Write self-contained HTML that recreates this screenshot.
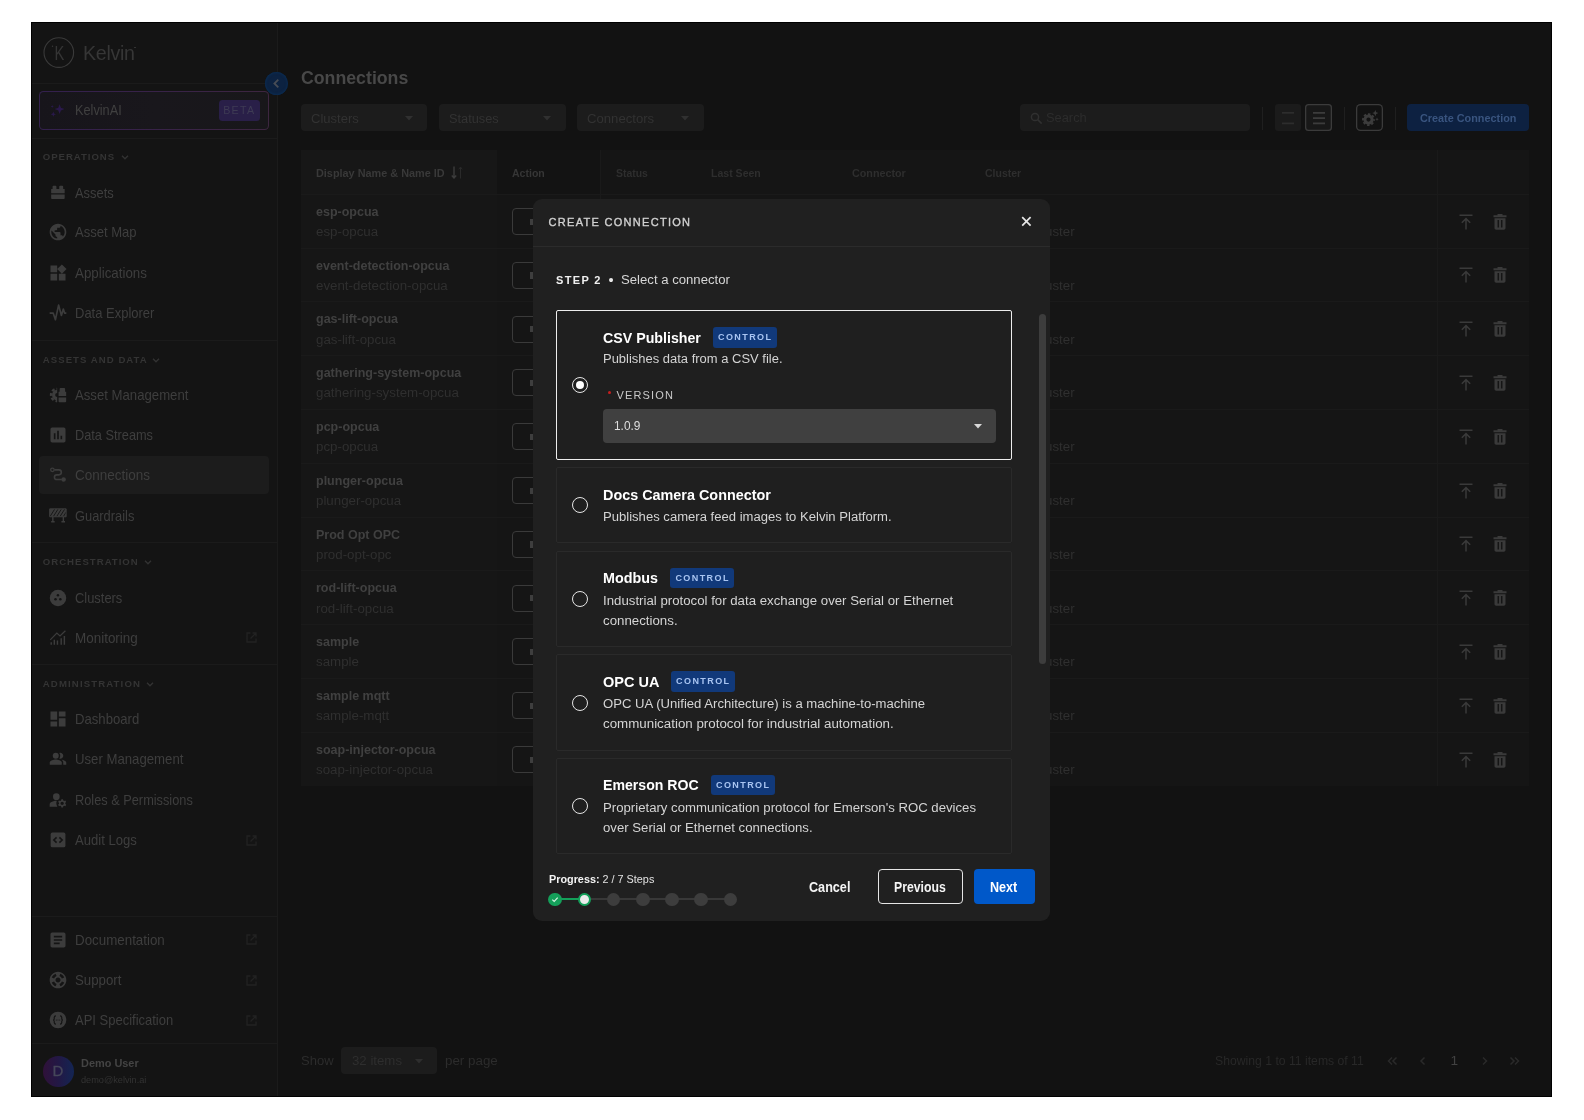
<!DOCTYPE html>
<html lang="en">
<head>
<meta charset="utf-8">
<title>Kelvin - Connections</title>
<style>
*{box-sizing:border-box;margin:0;padding:0}
html,body{width:1584px;height:1120px;background:#fff;overflow:hidden}
body{font-family:"Liberation Sans",sans-serif;color:#3c3c3c;position:relative}
#app{position:absolute;left:31px;top:22px;width:1521px;height:1075px;background:#121212;overflow:hidden;box-shadow:0 0 0 1px #0a0a0a inset}

#stage{position:absolute;left:0;top:0;width:1584px;height:1120px;overflow:hidden;will-change:transform}
.abs{position:absolute}
.t{position:absolute;white-space:nowrap;line-height:20px;margin-top:-10px;transform-origin:0 50%}
.hl{position:absolute;height:1px;background:#1b1b1b}
.vl{position:absolute;width:1px;background:#1d1d1d}
/* sidebar */
#sidebar{position:absolute;left:31px;top:22px;width:246px;height:1075px;background:#141414}
.sec{font-size:9.6px;font-weight:bold;color:#343434;left:42.8px}
.nav{font-size:14.2px;color:#3e3e3e;left:75.4px}
.ico{position:absolute;left:48px;width:20px;height:20px;margin-top:-10px;fill:#3c3c3c}
.ext{position:absolute;left:246px;width:11px;height:11px;margin-top:-5.5px;fill:none;stroke:#222;stroke-width:1.3}
</style>
</head>
<body>
<div id="app"></div>
<div id="stage">
<!--SIDEBAR-->
<div id="sidebar"></div>
<div class="vl" style="left:277px;top:22px;height:1075px;background:#1b1b1b"></div>
<!-- logo -->
<svg class="abs" style="left:42px;top:36px" width="34" height="34" viewBox="0 0 34 34"><circle cx="16.8" cy="16.6" r="14.8" fill="none" stroke="#3a3a3a" stroke-width="1.1"/><text transform="translate(12.600,23.800) scale(.76,1)" font-family="Liberation Sans, sans-serif" font-size="19.400" fill="#353535">K</text><circle cx="10.500" cy="10.200" r=".7" fill="#3a3a3a"/></svg>
<span class="t" id="logotxt" style="transform:scaleX(1.0071);left:82.8px;top:53.2px;font-size:19.5px;color:#363636;letter-spacing:-.3px;line-height:30px;margin-top:-15px">Kelvin</span>
<div class="abs" style="left:134.3px;top:46.5px;width:1.8px;height:1.8px;border-radius:50%;background:#383838"></div>
<div class="hl" style="left:31px;top:83px;width:246px"></div>
<!-- KelvinAI -->
<div class="abs" style="left:39px;top:91px;width:230px;height:38.5px;border-radius:4.5px;background:linear-gradient(90deg,#33204e,#392347 60%,#3d2640)"></div><div class="abs" style="left:40px;top:92px;width:228px;height:36.5px;border-radius:3.5px;background:linear-gradient(90deg,#17151b,#19171c 50%,#18171a)"></div>
<svg class="abs" style="left:49px;top:102px" width="17" height="17" viewBox="0 0 17 17" fill="#2a194c"><path d="M10.6 2.2l1.3 3.6 3.6 1.3-3.6 1.3-1.3 3.6-1.3-3.6-3.6-1.3 3.6-1.3z"/><path d="M4.3 9.6l.7 1.9 1.9.7-1.9.7-.7 1.9-.7-1.9-1.9-.7 1.9-.7z"/><path d="M3.2 3l.4 1.1 1.1.4-1.1.4-.4 1.1-.4-1.1-1.1-.4 1.1-.4z"/></svg>
<span class="t" id="kai" style="transform:scaleX(0.9103);left:74.5px;top:110.1px;font-size:14px;color:#404040">KelvinAI</span>
<div class="abs" style="left:219px;top:99.5px;width:40.5px;height:21px;border-radius:3.5px;background:#291f48"></div>
<span class="t" id="beta" style="letter-spacing:1.29px;left:223.2px;top:110px;font-size:10.7px;color:#3e3b54">BETA</span>
<div class="hl" style="left:31px;top:137.5px;width:246px"></div>
<!-- collapse button -->
<div class="abs" style="left:265px;top:71.5px;width:23px;height:23px;border-radius:50%;background:#0c2241;box-shadow:inset 0 0 2px 1px #0b2b50"></div>
<svg class="abs" style="left:271px;top:77.5px" width="11" height="11" viewBox="0 0 11 11"><path d="M7.300 1.600L3.400 5.500l3.900 3.900" fill="none" stroke="#474c55" stroke-width="1.800"/></svg>

<!-- OPERATIONS -->
<span class="t sec" style="letter-spacing:0.96px;top:157px">OPERATIONS</span>
<svg class="abs chev" style="left:120.5px;top:154px" width="8" height="7" viewBox="0 0 8 7"><path d="M1 1.8l3 3 3-3" fill="none" stroke="#333" stroke-width="1.3"/></svg>
<svg class="ico" style="top:192.5px" viewBox="0 0 24 24"><path d="M3.8 7.300h1.700V4.300c0-.6.4-1 1-1h2.600c.6 0 1 .4 1 1v3h3.400v-3c0-.6.4-1 1-1h2.700c.6 0 1 .4 1 1v3H20v5.100H3.800zM3.800 13.800H20v4.500c0 .6-.4 1-1 1H4.800c-.6 0-1-.4-1-1z"/></svg>
<span class="t nav" style="transform:translateY(0.1px) scaleX(0.9089);top:192.5px">Assets</span>
<svg class="ico" style="top:232.3px" viewBox="0 0 24 24"><path d="M12 2C6.480 2 2 6.480 2 12s4.480 10 10 10 10-4.480 10-10S17.520 2 12 2zm-1 17.930c-3.950-.490-7-3.850-7-7.930 0-.62.080-1.210.210-1.790L9 15v1c0 1.100.9 2 2 2v1.930zm6.900-2.540c-.26-.81-1-1.390-1.900-1.390h-1v-3c0-.55-.45-1-1-1H8v-2h2c.55 0 1-.45 1-1V7h2c1.100 0 2-.9 2-2v-.41c2.930 1.190 5 4.060 5 7.410 0 2.080-.8 3.970-2.100 5.390z"/></svg>
<span class="t nav" style="transform:translateY(0.1px) scaleX(0.9190);top:232.3px">Asset Map</span>
<svg class="ico" style="top:272.9px" viewBox="0 0 24 24"><path d="M13 13v8h8v-8h-8zM3 21h8v-8H3v8zM3 3v8h8V3H3zm13.660-1.310L11 7.340 16.660 13l5.660-5.660-5.660-5.650z"/></svg>
<span class="t nav" style="transform:translateY(0.1px) scaleX(0.9397);top:272.9px">Applications</span>
<svg class="ico" style="top:313.2px" viewBox="0 0 24 24"><path d="M2 12.100h4.200l2.700 8 3.800-17.600 3.400 12.500 2.300-7.700 1.500 4.800H22" fill="none" stroke="#3c3c3c" stroke-width="2" stroke-linejoin="round"/></svg>
<span class="t nav" style="transform:translateY(0.1px) scaleX(0.9153);top:313.2px">Data Explorer</span>
<div class="hl" style="left:31px;top:340px;width:246px"></div>

<!-- ASSETS AND DATA -->
<span class="t sec" style="letter-spacing:1.04px;top:359.5px">ASSETS AND DATA</span>
<svg class="abs chev" style="left:152.2px;top:356.5px" width="8" height="7" viewBox="0 0 8 7"><path d="M1 1.8l3 3 3-3" fill="none" stroke="#333" stroke-width="1.3"/></svg>
<svg class="ico" style="top:394.6px" viewBox="0 0 24 24"><circle cx="11" cy="12" r="4.300" fill="none" stroke="#3c3c3c" stroke-width="3.800"/><circle cx="11" cy="12" r="7.300" fill="none" stroke="#3c3c3c" stroke-width="3" stroke-dasharray="3.300 2.430" stroke-dashoffset="1.600"/><rect x="11" y="0" width="13" height="24" fill="#141414"/><path d="M12.700 8h1.300V4.600c0-.6.4-1 1-1h4.500c.6 0 1 .4 1 1V8h1.300v5.300h-9.100zM12.700 15h9.100v4.700c0 .6-.4 1-1 1h-7.100c-.6 0-1-.4-1-1z"/></svg>
<span class="t nav" style="transform:translateY(0.1px) scaleX(0.9276);top:394.6px">Asset Management</span>
<svg class="ico" style="top:435px" viewBox="0 0 24 24"><path d="M19 3H5c-1.100 0-2 .9-2 2v14c0 1.100.9 2 2 2h14c1.100 0 2-.9 2-2V5c0-1.100-.9-2-2-2zM9 17H7v-7h2v7zm4 0h-2V7h2v10zm4 0h-2v-4h2v4z"/></svg>
<span class="t nav" style="transform:translateY(0.1px) scaleX(0.8993);top:435px">Data Streams</span>
<div class="abs" style="left:39px;top:456px;width:230px;height:38px;border-radius:4px;background:#1c1c1c"></div>
<svg class="ico" style="top:475.2px" viewBox="0 0 24 24"><circle cx="5.300" cy="5.800" r="2.100" fill="none" stroke="#3c3c3c" stroke-width="1.500"/><circle cx="18.700" cy="17.400" r="2.700"/><path d="M7.600 5.800h5.400a3 3 0 010 6h-2.500a2.800 2.800 0 000 5.600h6" fill="none" stroke="#3c3c3c" stroke-width="1.900"/></svg>
<span class="t nav" style="transform:translateY(0.1px) scaleX(0.9509);top:475.2px">Connections</span>
<svg class="ico" style="top:515.7px" viewBox="0 0 24 24"><path d="M2 3.400h19.800v9.500H2z"/><path d="M5.800 12.900v6M18.400 12.900v6M3.800 18.900h4.200M16.100 18.900h4.300" fill="none" stroke="#3c3c3c" stroke-width="1.700"/><path d="M2.500 12.500l5.500-8.700M6.500 12.500l5.500-8.700M10.500 12.500l5.500-8.700M14.500 12.500l5.500-8.700M18.500 12.500l3.300-5.200" stroke="#141414" stroke-width="1.100"/><path d="M2 3.400h19.800v9.500H2z" fill="none" stroke="#3c3c3c" stroke-width="1.200"/></svg>
<span class="t nav" style="transform:translateY(0.1px) scaleX(0.9075);top:515.7px">Guardrails</span>
<div class="hl" style="left:31px;top:542px;width:246px"></div>

<!-- ORCHESTRATION -->
<span class="t sec" style="letter-spacing:1.00px;top:562px">ORCHESTRATION</span>
<svg class="abs chev" style="left:143.7px;top:559px" width="8" height="7" viewBox="0 0 8 7"><path d="M1 1.8l3 3 3-3" fill="none" stroke="#333" stroke-width="1.3"/></svg>
<svg class="ico" style="top:597.7px" viewBox="0 0 24 24"><circle cx="12" cy="12" r="9.900"/><circle cx="11.900" cy="8.800" r="1.500" fill="#141414"/><circle cx="9" cy="13.500" r="1.500" fill="#141414"/><circle cx="14.800" cy="13.500" r="1.500" fill="#141414"/></svg>
<span class="t nav" style="transform:translateY(0.1px) scaleX(0.9088);top:597.7px">Clusters</span>
<svg class="ico" style="top:637.5px" viewBox="0 0 24 24"><path d="M3 17.100h1.700v3.100H3zM6.700 14.200h1.700v6H6.700zM10.500 15h1.700v5.200h-1.700zM15 12.400h1.700v7.800H15zM18.800 9.500h1.700v10.700h-1.700z"/><path d="M2.700 14.200l7.900-8.100 3.800 3.400L20.900 3.300" fill="none" stroke="#3c3c3c" stroke-width="1.500"/></svg>
<span class="t nav" style="transform:translateY(0.1px) scaleX(0.9479);top:637.5px">Monitoring</span>
<svg class="ext" style="top:637.5px" viewBox="0 0 11 11"><path d="M4.500 1H1v9h9V6.500M6.500 1H10v3.500M10 1L4.500 6.500"/></svg>
<div class="hl" style="left:31px;top:663.5px;width:246px"></div>

<!-- ADMINISTRATION -->
<span class="t sec" style="letter-spacing:1.13px;top:683.7px">ADMINISTRATION</span>
<svg class="abs chev" style="left:146.3px;top:680.7px" width="8" height="7" viewBox="0 0 8 7"><path d="M1 1.8l3 3 3-3" fill="none" stroke="#333" stroke-width="1.3"/></svg>
<svg class="ico" style="top:719px" viewBox="0 0 24 24"><path d="M3 13h8V3H3v10zm0 8h8v-6H3v6zm10 0h8V11h-8v10zm0-18v6h8V3h-8z"/></svg>
<span class="t nav" style="transform:translateY(0.1px) scaleX(0.9248);top:719px">Dashboard</span>
<svg class="ico" style="top:759.3px" viewBox="0 0 24 24"><g transform="translate(1.200,1) scale(.9)"><path d="M16.670 13.130C18.040 14.060 19 15.320 19 17v3h4v-3c0-2.180-3.570-3.470-6.330-3.870zM15 12c2.210 0 4-1.790 4-4s-1.790-4-4-4c-.47 0-.91.1-1.330.24C14.500 5.270 15 6.580 15 8s-.5 2.730-1.330 3.760c.42.14.86.24 1.330.24z"/><circle cx="9" cy="8" r="4"/><path d="M9 13c-2.670 0-8 1.340-8 4v3h16v-3c0-2.660-5.330-4-8-4z"/></g></svg>
<span class="t nav" style="transform:translateY(0.1px) scaleX(0.9287);top:759.3px">User Management</span>
<svg class="ico" style="top:799.5px" viewBox="0 0 24 24"><circle cx="10" cy="8" r="4"/><path d="M10.670 13.020c-.22-.01-.44-.02-.67-.02-2.420 0-4.680.67-6.610 1.820-.88.52-1.390 1.500-1.390 2.530V20h9.260c-.79-1.130-1.260-2.510-1.260-4 0-1.070.25-2.070.67-2.980z"/><path d="M20.750 16c0-.22-.03-.42-.06-.63l1.140-1.010-1-1.730-1.450.49c-.32-.27-.68-.48-1.080-.63L18 11h-2l-.3 1.490c-.4.15-.76.36-1.080.63l-1.450-.49-1 1.730 1.140 1.010c-.03.21-.06.41-.06.63s.03.42.06.63l-1.140 1.010 1 1.730 1.450-.49c.32.27.68.48 1.080.63L16 21h2l.3-1.490c.4-.15.76-.36 1.080-.63l1.450.49 1-1.730-1.140-1.010c.03-.21.06-.41.06-.63zM17 18c-1.100 0-2-.9-2-2s.9-2 2-2 2 .9 2 2-.9 2-2 2z"/></svg>
<span class="t nav" style="transform:translateY(0.1px) scaleX(0.9000);top:799.5px">Roles &amp; Permissions</span>
<svg class="ico" style="top:840px" viewBox="0 0 24 24"><rect x="3.200" y="3.100" width="17.700" height="17.700" rx="2"/><path d="M10.300 8.800L7 12l3.300 3.200M13.700 8.800L17 12l-3.300 3.200" fill="none" stroke="#141414" stroke-width="1.900"/></svg>
<span class="t nav" style="transform:translateY(0.1px) scaleX(0.9232);top:840px">Audit Logs</span>
<svg class="ext" style="top:840px" viewBox="0 0 11 11"><path d="M4.500 1H1v9h9V6.500M6.500 1H10v3.500M10 1L4.500 6.500"/></svg>

<!-- bottom links -->
<div class="hl" style="left:31px;top:916px;width:246px"></div>
<svg class="ico" style="top:939.6px" viewBox="0 0 24 24"><path d="M19 3H5c-1.100 0-2 .9-2 2v14c0 1.100.9 2 2 2h14c1.100 0 2-.9 2-2V5c0-1.100-.9-2-2-2zm-5 14H7v-2h7v2zm3-4H7v-2h10v2zm0-4H7V7h10v2z"/></svg>
<span class="t nav" style="transform:translateY(0.1px) scaleX(0.9409);top:939.6px">Documentation</span>
<svg class="ext" style="top:939.6px" viewBox="0 0 11 11"><path d="M4.500 1H1v9h9V6.500M6.500 1H10v3.500M10 1L4.500 6.500"/></svg>
<svg class="ico" style="top:980px" viewBox="0 0 24 24"><path d="M12 2C6.480 2 2 6.480 2 12s4.480 10 10 10 10-4.480 10-10S17.520 2 12 2zm7.460 7.120l-2.780 1.150c-.51-1.360-1.580-2.440-2.950-2.940l1.150-2.780c2.100.8 3.770 2.470 4.580 4.570zM12 15c-1.660 0-3-1.340-3-3s1.340-3 3-3 3 1.340 3 3-1.340 3-3 3zM9.130 4.540l1.170 2.780c-1.380.5-2.470 1.590-2.980 2.970L4.540 9.130c.81-2.110 2.480-3.780 4.590-4.590zM4.540 14.870l2.780-1.150c.51 1.380 1.590 2.460 2.970 2.960l-1.170 2.780c-2.100-.81-3.770-2.480-4.580-4.590zm10.340 4.590l-1.150-2.780c1.370-.51 2.450-1.590 2.950-2.970l2.780 1.170c-.81 2.100-2.480 3.770-4.580 4.580z"/></svg>
<span class="t nav" style="transform:translateY(0.1px) scaleX(0.9335);top:980px">Support</span>
<svg class="ext" style="top:980px" viewBox="0 0 11 11"><path d="M4.500 1H1v9h9V6.500M6.500 1H10v3.500M10 1L4.500 6.500"/></svg>
<svg class="ico" style="top:1020.2px" viewBox="0 0 24 24"><circle cx="12" cy="12" r="10"/><path d="M9.600 7c-1.600 0-2.100.7-2.100 2v1.500c0 .8-.5 1.300-1.300 1.500.8.200 1.300.7 1.300 1.500V15c0 1.300.5 2 2.100 2M14.400 7c1.600 0 2.100.7 2.100 2v1.500c0 .8.5 1.300 1.300 1.500-.8.200-1.300.7-1.300 1.500V15c0 1.300-.5 2-2.100 2" fill="none" stroke="#141414" stroke-width="1.400"/><circle cx="10" cy="12" r=".7" fill="#141414"/><circle cx="12" cy="12" r=".7" fill="#141414"/><circle cx="14" cy="12" r=".7" fill="#141414"/></svg>
<span class="t nav" style="transform:translateY(0.1px) scaleX(0.9155);top:1020.2px">API Specification</span>
<svg class="ext" style="top:1020.2px" viewBox="0 0 11 11"><path d="M4.500 1H1v9h9V6.500M6.500 1H10v3.500M10 1L4.500 6.500"/></svg>
<div class="hl" style="left:31px;top:1043px;width:246px"></div>
<!-- user -->
<div class="abs" style="left:42.500px;top:1055.500px;width:31px;height:31px;border-radius:50%;background:linear-gradient(90deg,#2f1139,#221845 50%,#132553)"></div>
<span class="t" style="left:52.4px;top:1071.3px;font-size:15px;color:#46475a;-webkit-text-stroke:.3px #46475a">D</span>
<span class="t" id="uname" style="transform:scaleX(0.9503);left:81px;top:1062.500px;font-size:11.5px;font-weight:bold;color:#444">Demo User</span>
<span class="t" id="umail" style="transform:scaleX(1.0191);left:81px;top:1079.500px;font-size:9px;color:#333">demo@kelvin.ai</span>
<!--/SIDEBAR-->
<!--MAIN-->
<style>
.f{position:absolute;top:104px;height:27px;border-radius:4px;background:#1c1c1c}
.ft{font-size:13.7px;color:#323232}
.th{font-size:11px;font-weight:bold;color:#2e2e2e}
.rn{font-size:13.2px;font-weight:bold;color:#404040;left:316.4px}
.rs{font-size:13.7px;color:#2f2f2f;left:316.4px}
.ab{position:absolute;left:512px;width:76px;height:27px;border:1px solid #3a3a3a;border-radius:4px}
.ab i{position:absolute;left:16.5px;top:9.600px;width:6px;height:6.200px;background:#3e3e3e}
.ri{position:absolute;fill:#3a3a3a}
.cl{font-size:13.7px;color:#2f2f2f;transform-origin:100% 50%}

</style>
<span class="t" id="title" style="transform:scaleX(0.9578);left:301px;top:78.4px;font-size:18.5px;font-weight:bold;color:#484848;line-height:24px;margin-top:-12px">Connections</span>
<div class="f" style="left:301px;width:126px"></div>
<span class="t ft" id="f0" style="transform:scaleX(0.9521);left:311.4px;top:118.6px">Clusters</span>
<svg class="abs" style="left:405px;top:116px" width="8" height="5" viewBox="0 0 8 5"><path d="M0 0h8L4 4.500z" fill="#303030"/></svg>
<div class="f" style="left:439px;width:126.5px"></div>
<span class="t ft" id="f1" style="transform:scaleX(0.9331);left:449.4px;top:118.6px">Statuses</span>
<svg class="abs" style="left:543px;top:116px" width="8" height="5" viewBox="0 0 8 5"><path d="M0 0h8L4 4.500z" fill="#303030"/></svg>
<div class="f" style="left:577px;width:127px"></div>
<span class="t ft" id="f2" style="transform:scaleX(0.9600);left:587.4px;top:118.6px">Connectors</span>
<svg class="abs" style="left:681px;top:116px" width="8" height="5" viewBox="0 0 8 5"><path d="M0 0h8L4 4.500z" fill="#303030"/></svg>
<div class="f" style="left:1020px;width:230.3px"></div>
<svg class="abs" style="left:1029.500px;top:112px" width="13" height="13" viewBox="0 0 13 13"><circle cx="5" cy="5" r="3.600" fill="none" stroke="#303030" stroke-width="1.500"/><path d="M7.700 7.700l4 4" stroke="#303030" stroke-width="1.700"/></svg>
<span class="t ft" id="search" style="transform:scaleX(0.9383);left:1046.3px;top:118.4px;color:#2c2c2c">Search</span>
<div class="vl" style="left:1262px;top:106.500px;height:23px;background:#1f1f1f"></div>
<div class="vl" style="left:1344px;top:106.500px;height:23px;background:#1f1f1f"></div>
<div class="vl" style="left:1394.5px;top:106.500px;height:23px;background:#1f1f1f"></div>
<div class="abs" style="left:1274.600px;top:104px;width:26.500px;height:27px;border-radius:3px;background:#1b1b1b"></div>
<svg class="abs" style="left:1282px;top:111px" width="12" height="14" viewBox="0 0 12 14"><path d="M0 1.900h12M0 12.300h12" stroke="#2d2d2d" stroke-width="1.700"/></svg>
<div class="abs" style="left:1305px;top:104px;width:27px;height:27px;border-radius:3.5px;background:#181818;box-shadow:inset 0 0 0 1.3px #3b3b3b"></div>
<svg class="abs" style="left:1312.800px;top:111px" width="12" height="14" viewBox="0 0 12 14"><path d="M0 1.900h12M0 7.100h12M0 12.300h12" stroke="#3c3c3c" stroke-width="1.700"/></svg>
<div class="abs" style="left:1356px;top:104px;width:27px;height:27px;border-radius:4.5px;background:#121212;box-shadow:inset 0 0 0 1.3px #3b3b3b"></div>
<svg class="abs" style="left:1359.500px;top:108px" width="20" height="20" viewBox="0 0 20 20"><circle cx="8.500" cy="11.600" r="3.600" fill="none" stroke="#3c3c3c" stroke-width="3"/><circle cx="8.500" cy="11.600" r="5.500" fill="none" stroke="#3c3c3c" stroke-width="1.900" stroke-dasharray="2.400 1.920" stroke-dashoffset="1.200"/><path d="M15.300 2l.9 2.200 2.200.9-2.200.9-.9 2.200-.9-2.200-2.200-.9 2.200-.9z" fill="#3c3c3c"/><path d="M17 9.500l.5 1.200 1.200.5-1.200.5-.5 1.200-.5-1.200-1.200-.5 1.200-.5z" fill="#3c3c3c"/></svg>
<div class="abs" style="left:1407px;top:104px;width:122px;height:27px;border-radius:4px;background:#0d2141"></div>
<span class="t" id="ccbtn" style="transform:scaleX(0.9428);left:1419.800px;top:118.2px;font-size:11.5px;font-weight:bold;color:#39547f">Create Connection</span>
<div class="abs" style="left:301px;top:150.300px;width:1228px;height:635.500px;background:#151515"></div>
<div class="abs" style="left:301px;top:150.300px;width:195.500px;height:635.500px;background:#161616"></div>
<div class="abs" style="left:301px;top:150.300px;width:195.500px;height:43.500px;background:#171717"></div>
<div class="abs" style="left:496.500px;top:150.300px;width:103px;height:43.500px;background:#131313"></div>
<div class="vl" style="left:599.500px;top:150.300px;height:635.500px;background:#1a1a1a"></div>
<div class="vl" style="left:1437px;top:150.300px;height:635.500px;background:#1a1a1a"></div>
<span class="t th" style="transform:scaleX(0.9876);left:316.4px;top:172.800px;color:#393939">Display Name &amp; Name ID</span>
<span class="t th" style="transform:scaleX(0.9581);left:512.2px;top:172.800px;color:#363636">Action</span>
<span class="t th" style="transform:scaleX(0.9487);left:615.8px;top:172.800px;color:#2e2e2e">Status</span>
<span class="t th" style="transform:scaleX(0.9583);left:711px;top:172.800px;color:#2e2e2e">Last Seen</span>
<span class="t th" style="transform:scaleX(0.9782);left:852px;top:172.800px;color:#2e2e2e">Connector</span>
<span class="t th" style="transform:scaleX(0.9550);left:984.6px;top:172.800px;color:#2e2e2e">Cluster</span>
<svg class="abs" style="left:451px;top:166px" width="12" height="13" viewBox="0 0 12 13"><path d="M3 .5v11M.8 9.500L3 12l2.200-2.500" fill="none" stroke="#3c3c3c" stroke-width="1.400"/><path d="M9.500 12.500v-11M7.800 3.300L9.500 1l1.700 2.300" fill="none" stroke="#2a2a2a" stroke-width="1"/></svg>
<div class="hl" style="left:301px;top:193.7px;width:1228px;background:#1a1a1a"></div>
<span class="t rn" style="transform:scaleX(0.9484);top:211.8px">esp-opcua</span>
<span class="t rs" style="transform:scaleX(0.9728);top:232.0px">esp-opcua</span>
<div class="ab" style="top:208.0px"><i></i></div>
<span class="t cl" style="transform:scaleX(0.9728);right:509.5px;top:232.0px">docs-demo-cluster</span>
<svg class="ri" style="left:1458.500px;top:213.5px" width="14" height="16" viewBox="0 0 14 16"><path d="M.5 1.200h13M7 15.500V5M2.800 8.800L7 4.600l4.200 4.200" fill="none" stroke="#3a3a3a" stroke-width="1.500"/></svg>
<svg class="ri" style="left:1493px;top:213.5px" width="14" height="16" viewBox="0 0 14 16"><path d="M4.500 0h5v1.200H13.500v2H.5v-2H4.500zM1.500 4.200h11V14c0 1-.7 1.700-1.700 1.700H3.200c-1 0-1.700-.7-1.700-1.700z"/><path d="M5.300 6v7.500M8.700 6v7.500" stroke="#151515" stroke-width="1.500"/></svg>
<div class="hl" style="left:301px;top:247.5px;width:1228px;background:#1a1a1a"></div>
<span class="t rn" style="transform:scaleX(0.9484);top:265.6px">event-detection-opcua</span>
<span class="t rs" style="transform:scaleX(0.9728);top:285.8px">event-detection-opcua</span>
<div class="ab" style="top:261.8px"><i></i></div>
<span class="t cl" style="transform:scaleX(0.9728);right:509.5px;top:285.8px">docs-demo-cluster</span>
<svg class="ri" style="left:1458.500px;top:267.3px" width="14" height="16" viewBox="0 0 14 16"><path d="M.5 1.200h13M7 15.500V5M2.800 8.800L7 4.600l4.200 4.200" fill="none" stroke="#3a3a3a" stroke-width="1.500"/></svg>
<svg class="ri" style="left:1493px;top:267.3px" width="14" height="16" viewBox="0 0 14 16"><path d="M4.500 0h5v1.200H13.500v2H.5v-2H4.500zM1.500 4.200h11V14c0 1-.7 1.700-1.700 1.700H3.200c-1 0-1.700-.7-1.700-1.700z"/><path d="M5.300 6v7.500M8.700 6v7.500" stroke="#151515" stroke-width="1.500"/></svg>
<div class="hl" style="left:301px;top:301.3px;width:1228px;background:#1a1a1a"></div>
<span class="t rn" style="transform:scaleX(0.9484);top:319.4px">gas-lift-opcua</span>
<span class="t rs" style="transform:scaleX(0.9728);top:339.6px">gas-lift-opcua</span>
<div class="ab" style="top:315.6px"><i></i></div>
<span class="t cl" style="transform:scaleX(0.9728);right:509.5px;top:339.6px">docs-demo-cluster</span>
<svg class="ri" style="left:1458.500px;top:321.1px" width="14" height="16" viewBox="0 0 14 16"><path d="M.5 1.200h13M7 15.500V5M2.800 8.800L7 4.600l4.200 4.200" fill="none" stroke="#3a3a3a" stroke-width="1.500"/></svg>
<svg class="ri" style="left:1493px;top:321.1px" width="14" height="16" viewBox="0 0 14 16"><path d="M4.500 0h5v1.200H13.500v2H.5v-2H4.500zM1.500 4.200h11V14c0 1-.7 1.700-1.700 1.700H3.200c-1 0-1.700-.7-1.700-1.700z"/><path d="M5.300 6v7.500M8.700 6v7.500" stroke="#151515" stroke-width="1.500"/></svg>
<div class="hl" style="left:301px;top:355.1px;width:1228px;background:#1a1a1a"></div>
<span class="t rn" style="transform:scaleX(0.9484);top:373.2px">gathering-system-opcua</span>
<span class="t rs" style="transform:scaleX(0.9728);top:393.4px">gathering-system-opcua</span>
<div class="ab" style="top:369.4px"><i></i></div>
<span class="t cl" style="transform:scaleX(0.9728);right:509.5px;top:393.4px">docs-demo-cluster</span>
<svg class="ri" style="left:1458.500px;top:374.9px" width="14" height="16" viewBox="0 0 14 16"><path d="M.5 1.200h13M7 15.500V5M2.800 8.800L7 4.600l4.200 4.200" fill="none" stroke="#3a3a3a" stroke-width="1.500"/></svg>
<svg class="ri" style="left:1493px;top:374.9px" width="14" height="16" viewBox="0 0 14 16"><path d="M4.500 0h5v1.200H13.500v2H.5v-2H4.500zM1.500 4.200h11V14c0 1-.7 1.700-1.700 1.700H3.200c-1 0-1.700-.7-1.700-1.700z"/><path d="M5.300 6v7.500M8.700 6v7.500" stroke="#151515" stroke-width="1.500"/></svg>
<div class="hl" style="left:301px;top:408.9px;width:1228px;background:#1a1a1a"></div>
<span class="t rn" style="transform:scaleX(0.9484);top:427.0px">pcp-opcua</span>
<span class="t rs" style="transform:scaleX(0.9728);top:447.2px">pcp-opcua</span>
<div class="ab" style="top:423.2px"><i></i></div>
<span class="t cl" style="transform:scaleX(0.9728);right:509.5px;top:447.2px">docs-demo-cluster</span>
<svg class="ri" style="left:1458.500px;top:428.7px" width="14" height="16" viewBox="0 0 14 16"><path d="M.5 1.200h13M7 15.500V5M2.800 8.800L7 4.600l4.200 4.200" fill="none" stroke="#3a3a3a" stroke-width="1.500"/></svg>
<svg class="ri" style="left:1493px;top:428.7px" width="14" height="16" viewBox="0 0 14 16"><path d="M4.500 0h5v1.200H13.500v2H.5v-2H4.500zM1.500 4.200h11V14c0 1-.7 1.700-1.700 1.700H3.200c-1 0-1.700-.7-1.700-1.700z"/><path d="M5.300 6v7.500M8.700 6v7.500" stroke="#151515" stroke-width="1.500"/></svg>
<div class="hl" style="left:301px;top:462.7px;width:1228px;background:#1a1a1a"></div>
<span class="t rn" style="transform:scaleX(0.9484);top:480.8px">plunger-opcua</span>
<span class="t rs" style="transform:scaleX(0.9728);top:501.0px">plunger-opcua</span>
<div class="ab" style="top:477.0px"><i></i></div>
<span class="t cl" style="transform:scaleX(0.9728);right:509.5px;top:501.0px">docs-demo-cluster</span>
<svg class="ri" style="left:1458.500px;top:482.5px" width="14" height="16" viewBox="0 0 14 16"><path d="M.5 1.200h13M7 15.500V5M2.800 8.800L7 4.600l4.200 4.200" fill="none" stroke="#3a3a3a" stroke-width="1.500"/></svg>
<svg class="ri" style="left:1493px;top:482.5px" width="14" height="16" viewBox="0 0 14 16"><path d="M4.500 0h5v1.200H13.500v2H.5v-2H4.500zM1.500 4.200h11V14c0 1-.7 1.700-1.700 1.700H3.200c-1 0-1.700-.7-1.700-1.700z"/><path d="M5.300 6v7.500M8.700 6v7.500" stroke="#151515" stroke-width="1.500"/></svg>
<div class="hl" style="left:301px;top:516.5px;width:1228px;background:#1a1a1a"></div>
<span class="t rn" style="transform:scaleX(0.9484);top:534.6px">Prod Opt OPC</span>
<span class="t rs" style="transform:scaleX(0.9728);top:554.8px">prod-opt-opc</span>
<div class="ab" style="top:530.8px"><i></i></div>
<span class="t cl" style="transform:scaleX(0.9728);right:509.5px;top:554.8px">docs-demo-cluster</span>
<svg class="ri" style="left:1458.500px;top:536.3px" width="14" height="16" viewBox="0 0 14 16"><path d="M.5 1.200h13M7 15.500V5M2.800 8.800L7 4.600l4.200 4.200" fill="none" stroke="#3a3a3a" stroke-width="1.500"/></svg>
<svg class="ri" style="left:1493px;top:536.3px" width="14" height="16" viewBox="0 0 14 16"><path d="M4.500 0h5v1.200H13.500v2H.5v-2H4.500zM1.500 4.200h11V14c0 1-.7 1.700-1.700 1.700H3.200c-1 0-1.700-.7-1.700-1.700z"/><path d="M5.300 6v7.500M8.700 6v7.500" stroke="#151515" stroke-width="1.500"/></svg>
<div class="hl" style="left:301px;top:570.3px;width:1228px;background:#1a1a1a"></div>
<span class="t rn" style="transform:scaleX(0.9484);top:588.4px">rod-lift-opcua</span>
<span class="t rs" style="transform:scaleX(0.9728);top:608.6px">rod-lift-opcua</span>
<div class="ab" style="top:584.6px"><i></i></div>
<span class="t cl" style="transform:scaleX(0.9728);right:509.5px;top:608.6px">docs-demo-cluster</span>
<svg class="ri" style="left:1458.500px;top:590.1px" width="14" height="16" viewBox="0 0 14 16"><path d="M.5 1.200h13M7 15.500V5M2.800 8.800L7 4.600l4.200 4.200" fill="none" stroke="#3a3a3a" stroke-width="1.500"/></svg>
<svg class="ri" style="left:1493px;top:590.1px" width="14" height="16" viewBox="0 0 14 16"><path d="M4.500 0h5v1.200H13.500v2H.5v-2H4.500zM1.500 4.200h11V14c0 1-.7 1.700-1.700 1.700H3.200c-1 0-1.700-.7-1.700-1.700z"/><path d="M5.300 6v7.500M8.700 6v7.500" stroke="#151515" stroke-width="1.500"/></svg>
<div class="hl" style="left:301px;top:624.1px;width:1228px;background:#1a1a1a"></div>
<span class="t rn" style="transform:scaleX(0.9484);top:642.2px">sample</span>
<span class="t rs" style="transform:scaleX(0.9728);top:662.4px">sample</span>
<div class="ab" style="top:638.4px"><i></i></div>
<span class="t cl" style="transform:scaleX(0.9728);right:509.5px;top:662.4px">docs-demo-cluster</span>
<svg class="ri" style="left:1458.500px;top:643.9px" width="14" height="16" viewBox="0 0 14 16"><path d="M.5 1.200h13M7 15.500V5M2.800 8.800L7 4.600l4.200 4.200" fill="none" stroke="#3a3a3a" stroke-width="1.500"/></svg>
<svg class="ri" style="left:1493px;top:643.9px" width="14" height="16" viewBox="0 0 14 16"><path d="M4.500 0h5v1.200H13.500v2H.5v-2H4.500zM1.500 4.200h11V14c0 1-.7 1.700-1.700 1.700H3.200c-1 0-1.700-.7-1.700-1.700z"/><path d="M5.300 6v7.500M8.700 6v7.500" stroke="#151515" stroke-width="1.500"/></svg>
<div class="hl" style="left:301px;top:677.9px;width:1228px;background:#1a1a1a"></div>
<span class="t rn" style="transform:scaleX(0.9484);top:696.0px">sample mqtt</span>
<span class="t rs" style="transform:scaleX(0.9728);top:716.2px">sample-mqtt</span>
<div class="ab" style="top:692.2px"><i></i></div>
<span class="t cl" style="transform:scaleX(0.9728);right:509.5px;top:716.2px">docs-demo-cluster</span>
<svg class="ri" style="left:1458.500px;top:697.7px" width="14" height="16" viewBox="0 0 14 16"><path d="M.5 1.200h13M7 15.500V5M2.800 8.800L7 4.600l4.200 4.200" fill="none" stroke="#3a3a3a" stroke-width="1.500"/></svg>
<svg class="ri" style="left:1493px;top:697.7px" width="14" height="16" viewBox="0 0 14 16"><path d="M4.500 0h5v1.200H13.500v2H.5v-2H4.500zM1.500 4.200h11V14c0 1-.7 1.700-1.700 1.700H3.200c-1 0-1.700-.7-1.700-1.700z"/><path d="M5.300 6v7.500M8.700 6v7.500" stroke="#151515" stroke-width="1.500"/></svg>
<div class="hl" style="left:301px;top:731.7px;width:1228px;background:#1a1a1a"></div>
<span class="t rn" style="transform:scaleX(0.9484);top:749.8px">soap-injector-opcua</span>
<span class="t rs" style="transform:scaleX(0.9728);top:770.0px">soap-injector-opcua</span>
<div class="ab" style="top:746.0px"><i></i></div>
<span class="t cl" style="transform:scaleX(0.9728);right:509.5px;top:770.0px">docs-demo-cluster</span>
<svg class="ri" style="left:1458.500px;top:751.5px" width="14" height="16" viewBox="0 0 14 16"><path d="M.5 1.200h13M7 15.500V5M2.800 8.800L7 4.600l4.200 4.200" fill="none" stroke="#3a3a3a" stroke-width="1.500"/></svg>
<svg class="ri" style="left:1493px;top:751.5px" width="14" height="16" viewBox="0 0 14 16"><path d="M4.500 0h5v1.200H13.500v2H.5v-2H4.500zM1.500 4.200h11V14c0 1-.7 1.700-1.700 1.700H3.200c-1 0-1.700-.7-1.700-1.700z"/><path d="M5.300 6v7.500M8.700 6v7.500" stroke="#151515" stroke-width="1.500"/></svg>
<span class="t ft" style="transform:scaleX(0.9518);left:301px;top:1061px;color:#2c2c2c">Show</span>
<div class="f" style="left:341px;top:1047px;width:96px"></div>
<span class="t ft" style="transform:scaleX(0.9665);left:352px;top:1061px;color:#2e2e2e">32 items</span>
<svg class="abs" style="left:415px;top:1059px" width="8" height="5" viewBox="0 0 8 5"><path d="M0 0h8L4 4.500z" fill="#2e2e2e"/></svg>
<span class="t ft" id="perpage" style="transform:scaleX(0.9769);left:445.200px;top:1061px;color:#2c2c2c">per page</span>
<span class="t ft" id="showing" style="transform:scaleX(0.8916);left:1214.800px;top:1061px;font-size:13.7px;color:#282828">Showing 1 to 11 items of 11</span>
<svg class="abs" style="left:1386.7px;top:1056px" width="12" height="10" viewBox="0 0 12 10" fill="none" stroke="#2a2a2a" stroke-width="1.5"><path d="M5.500 1.500L2 5l3.500 3.500" transform="translate(-0.500,0)"/><path d="M5.500 1.500L2 5l3.500 3.500" transform="translate(4,0)"/></svg>
<svg class="abs" style="left:1417.4px;top:1056px" width="12" height="10" viewBox="0 0 12 10" fill="none" stroke="#2a2a2a" stroke-width="1.5"><path d="M5.500 1.500L2 5l3.500 3.500" transform="translate(2,0)"/></svg>
<span class="t ft" style="left:1450.500px;top:1061px;color:#414141">1</span>
<svg class="abs" style="left:1478.5px;top:1056px" width="12" height="10" viewBox="0 0 12 10" fill="none" stroke="#2a2a2a" stroke-width="1.5"><path d="M2 1.500L5.500 5 2 8.500" transform="translate(2,0)"/></svg>
<svg class="abs" style="left:1509px;top:1056px" width="12" height="10" viewBox="0 0 12 10" fill="none" stroke="#2a2a2a" stroke-width="1.5"><path d="M2 1.500L5.500 5 2 8.500" transform="translate(-0.500,0)"/><path d="M2 1.500L5.500 5 2 8.500" transform="translate(4,0)"/></svg>
<!--/MAIN-->
<!--MODAL-->
<style>
#modal{position:absolute;left:533px;top:199px;width:517px;height:722px;background:#202020;border-radius:9px}
.card{position:absolute;left:556px;width:456px;border:1px solid #2a2a2a;border-radius:2px;background:#1f1f1f}
.ct{font-size:15.3px;font-weight:bold;color:#fff;left:603.400px}
.cd{font-size:13.7px;color:#d4d4d4;left:603.400px}
.bdg{position:absolute;height:20.500px;border-radius:3px;background:#11397a}
.bt{font-size:9px;font-weight:bold;color:#a9c5f2}
.radio{position:absolute;left:572.200px;width:16px;height:16px;margin-top:-8px;border:1.7px solid #e6e6e6;border-radius:50%}
.dot{position:absolute;width:13.600px;height:13.600px;margin:-6.800px 0 0 -6.800px;border-radius:50%;background:#3d3d3d;top:899.300px}
</style>
<div id="modal"></div>
<div class="hl" style="left:533.400px;top:246px;width:516.200px;background:#2b2b2b"></div>
<span class="t" id="mtitle" style="letter-spacing:1.29px;-webkit-text-stroke:.35px #d0d0d0;left:548.600px;top:221.500px;font-size:11px;color:#d2d2d2">CREATE CONNECTION</span>
<svg class="abs" style="left:1021.100px;top:216.300px" width="11" height="11" viewBox="0 0 11 11"><path d="M1.200 1.200l8.400 8.400M9.600 1.200l-8.400 8.400" stroke="#e6e6e6" stroke-width="1.700"/></svg>
<span class="t" id="step" style="letter-spacing:1.34px;left:556px;top:279.900px;font-size:11px;font-weight:bold;color:#f0f0f0">STEP 2</span>
<span class="t" id="stepdot" style="left:608.500px;top:279.700px;font-size:14.500px;color:#e8e8e8">•</span>
<span class="t" id="stepd" style="transform:scaleX(0.9605);left:621px;top:279.900px;font-size:13.7px;color:#d6d6d6">Select a connector</span>
<div class="card" style="top:310px;height:150px;border-color:#ededed"></div>
<div class="card" style="top:467px;height:76px"></div>
<div class="card" style="top:551px;height:96px"></div>
<div class="card" style="top:654px;height:97px"></div>
<div class="card" style="top:758px;height:96px"></div>
<span class="t ct" id="c1t" style="transform:translateY(0.3px) scaleX(0.9288);top:337.700px">CSV Publisher</span>
<div class="bdg" style="left:712.900px;top:327px;width:64.200px"></div><span class="t bt" id="b1" style="letter-spacing:1.42px;transform:translateY(-0.4px);left:718px;top:337px">CONTROL</span>
<span class="t cd" id="c1d" style="transform:translateY(0.4px) scaleX(0.9475);top:359.300px">Publishes data from a CSV file.</span>
<div class="radio" style="top:384.800px"></div><div class="abs" style="left:576px;top:380.600px;width:8.400px;height:8.400px;border-radius:50%;background:#fff"></div>
<div class="abs" style="left:608.300px;top:391.300px;width:3px;height:3px;border-radius:50%;background:#c81e1e"></div>
<span class="t" id="ver" style="letter-spacing:1.18px;left:616.400px;top:395.200px;font-size:11px;color:#c9c9c9">VERSION</span>
<div class="abs" style="left:603.400px;top:408.600px;width:392.600px;height:34.600px;border-radius:4px;background:#404040"></div>
<span class="t" id="verv" style="transform:scaleX(0.8669);left:613.600px;top:426px;font-size:13.7px;color:#dedede">1.0.9</span>
<svg class="abs" style="left:973.700px;top:424px" width="8" height="5" viewBox="0 0 8 5"><path d="M0 0h8L4 4.600z" fill="#d8d8d8"/></svg>
<span class="t ct" id="c2t" style="transform:translateY(0.3px) scaleX(0.9405);top:495.200px">Docs Camera Connector</span>
<span class="t cd" id="c2d" style="transform:translateY(0.4px) scaleX(0.9555);top:517px">Publishes camera feed images to Kelvin Platform.</span>
<div class="radio" style="top:505px"></div>
<span class="t ct" id="c3t" style="transform:translateY(0.3px) scaleX(0.9379);top:578.200px">Modbus</span>
<div class="bdg" style="left:670.300px;top:567.500px;width:64.200px"></div><span class="t bt" style="letter-spacing:1.42px;transform:translateY(-0.4px);left:675.400px;top:577.500px">CONTROL</span>
<span class="t cd" id="c3d1" style="transform:translateY(0.4px) scaleX(0.9669);top:600.500px">Industrial protocol for data exchange over Serial or Ethernet</span>
<span class="t cd" id="c3d2" style="transform:translateY(0.4px) scaleX(0.9706);top:620.500px">connections.</span>
<div class="radio" style="top:599px"></div>
<span class="t ct" id="c4t" style="transform:translateY(0.3px) scaleX(0.9496);top:681.900px">OPC UA</span>
<div class="bdg" style="left:671px;top:671.200px;width:64.200px"></div><span class="t bt" style="letter-spacing:1.42px;transform:translateY(-0.4px);left:676.100px;top:681.200px">CONTROL</span>
<span class="t cd" id="c4d1" style="transform:translateY(0.4px) scaleX(0.9580);top:704.200px">OPC UA (Unified Architecture) is a machine-to-machine</span>
<span class="t cd" id="c4d2" style="transform:translateY(0.4px) scaleX(0.9747);top:724.200px">communication protocol for industrial automation.</span>
<div class="radio" style="top:702.700px"></div>
<span class="t ct" id="c5t" style="transform:translateY(0.3px) scaleX(0.9228);top:785.200px">Emerson ROC</span>
<div class="bdg" style="left:710.900px;top:774.500px;width:64.200px"></div><span class="t bt" style="letter-spacing:1.42px;transform:translateY(-0.4px);left:716px;top:784.500px">CONTROL</span>
<span class="t cd" id="c5d1" style="transform:translateY(0.4px) scaleX(0.9625);top:807.500px">Proprietary communication protocol for Emerson's ROC devices</span>
<span class="t cd" id="c5d2" style="transform:translateY(0.4px) scaleX(0.9632);top:827.500px">over Serial or Ethernet connections.</span>
<div class="radio" style="top:806px"></div>
<div class="abs" style="left:1039.300px;top:313.600px;width:6.700px;height:350.400px;border-radius:3.500px;background:#3d3d3d"></div>
<span class="t" id="prog" style="transform:scaleX(1.0026);left:548.600px;top:879.300px;font-size:10.8px;color:#e2e2e2"><b style="color:#f4f4f4">Progress:</b> 2 / 7 Steps</span>
<div class="abs" style="left:555.200px;top:898.300px;width:175.200px;height:2px;background:#383838"></div>
<div class="abs" style="left:555.200px;top:898.300px;width:29.200px;height:2px;background:#14a05a"></div>
<div class="dot" style="left:555.2px;background:#14a05a"></div>
<svg class="abs" style="left:551.2px;top:895.800px" width="8" height="7" viewBox="0 0 8 7"><path d="M1.300 3.600l1.900 1.900 3.500-3.800" fill="none" stroke="#d9f3e4" stroke-width="1.200"/></svg>
<div class="dot" style="left:584.4px;background:#ececec;border:2px solid #14a05a"></div>
<div class="dot" style="left:613.6px"></div>
<div class="dot" style="left:642.8px"></div>
<div class="dot" style="left:672.0px"></div>
<div class="dot" style="left:701.2px"></div>
<div class="dot" style="left:730.4px"></div>
<span class="t" id="cancel" style="transform:scaleX(0.9015);left:808.600px;top:887.4px;font-size:14px;font-weight:bold;color:#f4f4f4">Cancel</span>
<div class="abs" style="left:877.700px;top:869px;width:85px;height:35px;border:1.500px solid #e6e6e6;border-radius:4px"></div>
<span class="t" id="prev" style="transform:scaleX(0.8759);left:894px;top:887.4px;font-size:14px;font-weight:bold;color:#f4f4f4">Previous</span>
<div class="abs" style="left:974.100px;top:869px;width:60.700px;height:35px;border-radius:4px;background:#0058c9"></div>
<span class="t" id="next" style="transform:scaleX(0.8992);left:990.300px;top:887.4px;font-size:14px;font-weight:bold;color:#fff">Next</span>
<!--/MODAL-->
<div id="frame" class="abs" style="left:31px;top:22px;width:1521px;height:1075px;border:1px solid #000"></div>
</div>
</body>
</html>
